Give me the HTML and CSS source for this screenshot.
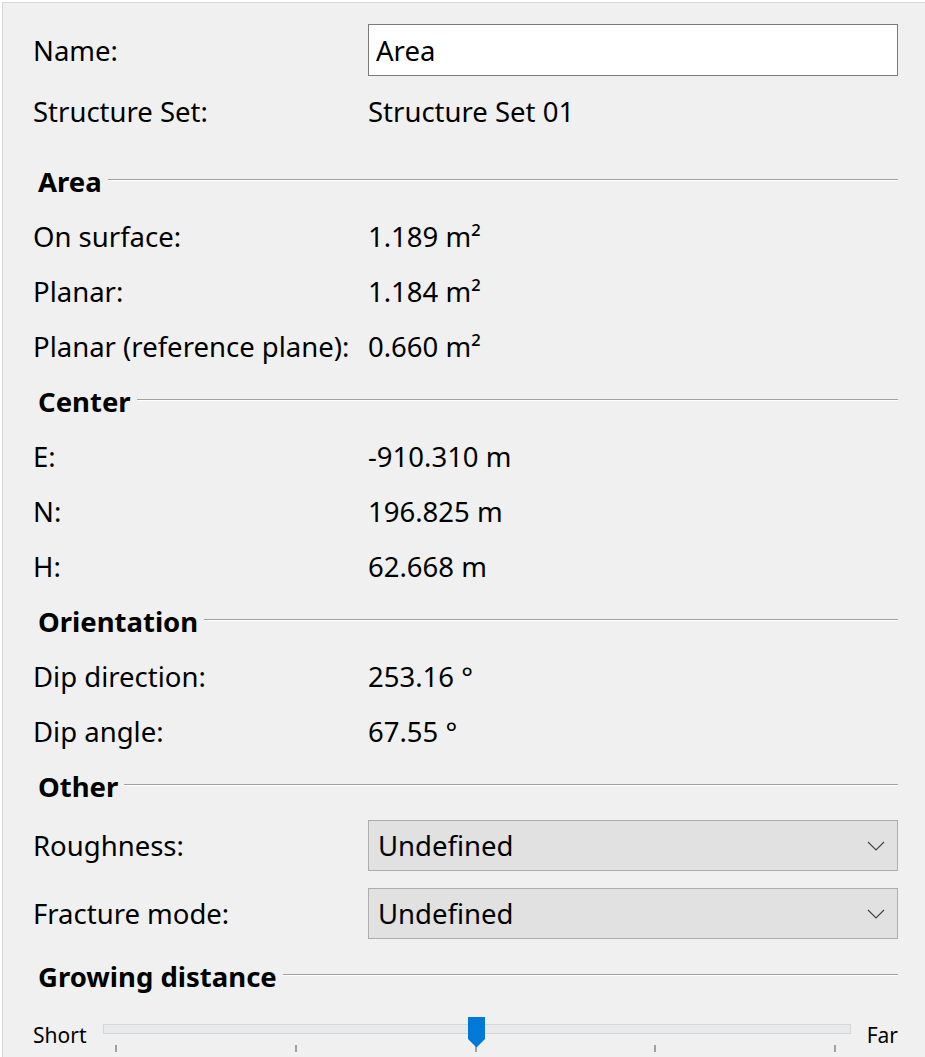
FILE: index.html
```html
<!DOCTYPE html>
<html lang="en">
<head>
  <meta charset="UTF-8">
  <title>Area properties</title>
  <link rel="stylesheet" href="styles.css">
</head>
<body>
  <div class="panel">
    <div class="row row-name">
      <div class="label">Name:</div>
      <input type="text" class="text-input" value="Area">
    </div>
    <div class="row row-first">
      <div class="label">Structure Set:</div>
      <div class="value">Structure Set 01</div>
    </div>

    <!-- Area -->
    <div class="group group-first"><span>Area</span><i class="rule"></i></div>
    <div class="row">
      <div class="label">On surface:</div>
      <div class="value">1.189 m²</div>
    </div>
    <div class="row">
      <div class="label">Planar:</div>
      <div class="value">1.184 m²</div>
    </div>
    <div class="row">
      <div class="label">Planar (reference plane):</div>
      <div class="value">0.660 m²</div>
    </div>

    <!-- Center -->
    <div class="group"><span>Center</span><i class="rule"></i></div>
    <div class="row">
      <div class="label">E:</div>
      <div class="value">-910.310 m</div>
    </div>
    <div class="row">
      <div class="label">N:</div>
      <div class="value">196.825 m</div>
    </div>
    <div class="row">
      <div class="label">H:</div>
      <div class="value">62.668 m</div>
    </div>

    <!-- Orientation -->
    <div class="group"><span>Orientation</span><i class="rule"></i></div>
    <div class="row">
      <div class="label">Dip direction:</div>
      <div class="value">253.16 °</div>
    </div>
    <div class="row">
      <div class="label">Dip angle:</div>
      <div class="value">67.55 °</div>
    </div>

    <!-- Other -->
    <div class="group"><span>Other</span><i class="rule"></i></div>
    <div class="row row-combo">
      <div class="label">Roughness:</div>
      <div class="combo">
        <span>Undefined</span>
        <svg class="chevron" width="18" height="10" viewBox="0 0 18 10"><polyline points="1,1 9,9 17,1" fill="none" stroke="#444" stroke-width="1.2"/></svg>
      </div>
    </div>
    <div class="row row-combo row-combo2">
      <div class="label">Fracture mode:</div>
      <div class="combo">
        <span>Undefined</span>
        <svg class="chevron" width="18" height="10" viewBox="0 0 18 10"><polyline points="1,1 9,9 17,1" fill="none" stroke="#444" stroke-width="1.2"/></svg>
      </div>
    </div>

    <!-- Growing distance -->
    <div class="group group-grow"><span>Growing distance</span><i class="rule"></i></div>
    <div class="slider">
      <div class="slider-label">Short</div>
      <div class="slider-body">
        <div class="track"></div>
        <div class="ticks"><i></i><i></i><i></i><i></i><i></i></div>
        <svg class="thumb" width="17" height="31" viewBox="0 0 17 31"><polygon points="0,0 17,0 17,22 8.5,30.5 0,22" fill="#0078d7"/></svg>
      </div>
      <div class="slider-label">Far</div>
    </div>
  </div>
</body>
</html>
```

FILE: styles.css
```css
html, body {margin:0; padding:0; background:#fff;}
body {font-family:"Noto Sans", "Open Sans", sans-serif; font-size:27.5px; color:#000; overflow:hidden;}
.panel {margin:2px 0 0 2px; border-top:1px solid #d9d9d9; border-left:1px solid #d9d9d9; background:#eff0ef; padding:0 27px 0 30px; height:1060px; box-sizing:border-box;}
.row {display:grid; grid-template-columns:335px 1fr; align-items:center; height:55px;}
.row-name {height:52px; padding-top:21px;}
.row-first {margin-top:8px;}
.label, .value {white-space:nowrap;}
.text-input {font:inherit; height:52px; box-sizing:border-box; border:1px solid #7a7a7a; background:#fff; padding:0 7px; margin:0; outline:none; color:#000;}
/* group headings with etched rule */
.group {display:flex; align-items:center; height:55px; padding-left:5px; font-weight:700;}
.group-first {margin-top:15px;}
.group .rule {flex:1; height:0; border-top:1px solid #a0a0a0; border-bottom:1px solid #fff; margin:-3px 0 0 6px;}
/* combo boxes */
.row-combo {height:51px; margin-top:6px;}
.row-combo2 {margin-top:17px;}
.combo {display:flex; align-items:center; justify-content:space-between; height:51px; box-sizing:border-box; border:1px solid #adadad; background:#e1e1e1; padding:0 12px 0 9px;}
.chevron {display:block;}
.group-grow {margin-top:10px;}
/* slider */
.slider {display:flex; align-items:center; height:62px; font-size:21px;}
.slider-label {white-space:nowrap;}
.slider-body {flex:1; align-self:stretch; position:relative; margin:0 16px 0 17px;}
.track {position:absolute; left:0; right:0; top:20px; height:8px; border:1px solid #d6d6d6; background:#e7eaea;}
.ticks {position:absolute; left:12px; right:15px; top:41px; height:7px; display:flex; justify-content:space-between;}
.ticks i {display:block; width:2px; height:7px; background:#a0a0a0;}
.thumb {position:absolute; left:calc(50% - 9px); top:13px; display:block;}
```
